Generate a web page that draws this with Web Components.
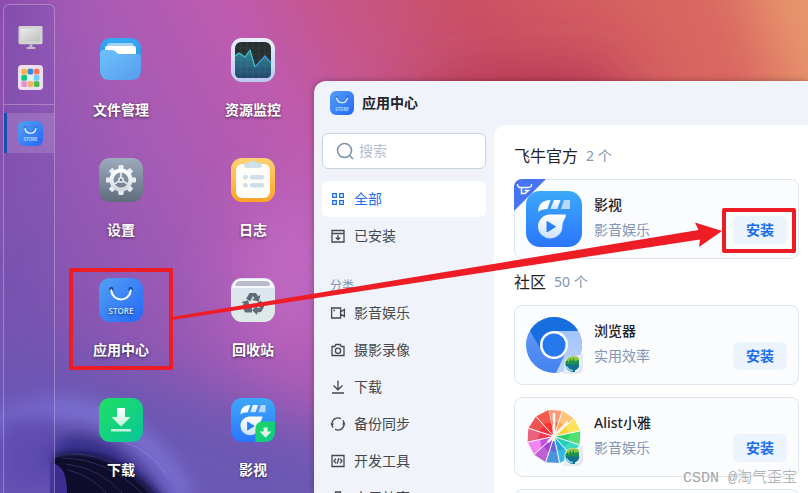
<!DOCTYPE html>
<html lang="zh-CN">
<head>
<meta charset="utf-8">
<title>应用中心</title>
<style>
body {
  margin: 0;
  font: 14px/20px "Noto Sans", "Noto Sans CJK SC", sans-serif;
  color: #1f2329;
}
</style>
</head>
<body>
<nas-desktop>
	<nas-dock slot="dock"></nas-dock>
	<desk-app icon="folder">文件管理</desk-app>
	<desk-app icon="monitor">资源监控</desk-app>
	<desk-app icon="gear">设置</desk-app>
	<desk-app icon="log">日志</desk-app>
	<desk-app icon="store">应用中心</desk-app>
	<desk-app icon="trash">回收站</desk-app>
	<desk-app icon="get">下载</desk-app>
	<desk-app icon="filmget">影视</desk-app>

	<app-window slot="window" heading="应用中心" icon="store">
		<search-box slot="side"></search-box>
		<nav-item slot="side" icon="grid" active>全部</nav-item>
		<nav-item slot="side" icon="installed">已安装</nav-item>
		<nav-label slot="side">分类</nav-label>
		<nav-item slot="side" icon="video">影音娱乐</nav-item>
		<nav-item slot="side" icon="camera">摄影录像</nav-item>
		<nav-item slot="side" icon="download">下载</nav-item>
		<nav-item slot="side" icon="sync">备份同步</nav-item>
		<nav-item slot="side" icon="code">开发工具</nav-item>
		<nav-item slot="side" icon="tool">实用效率</nav-item>

		<app-group heading="飞牛官方" count="2 个">
			<app-card icon="film" kind="影音娱乐" official>影视</app-card>
		</app-group>
		<app-group heading="社区" count="50 个">
			<app-card icon="browser" kind="实用效率">浏览器</app-card>
			<app-card icon="alist" kind="影音娱乐">Alist小雅</app-card>
			<app-card icon="film"></app-card>
		</app-group>
	</app-window>

	<mark-layer slot="marks">CSDN @淘气歪宝</mark-layer>
</nas-desktop>

<script type="module">
const html = (strings, ...parts) =>
	new DOMParser().parseFromString(parts
		.reduce((tpl, value, i) => `${tpl}${strings[i]}${value}`, '')
		.concat(strings[parts.length]),
	'text/html').querySelector('template')

class Base extends HTMLElement {
	constructor(tpl) {
		super()
		this.attachShadow({ mode: 'open' }).append(tpl.content.cloneNode(true))
	}
	$(sel) { return this.shadowRoot.querySelector(sel) }
}

/* ---------- icons ---------- */

const grad = (id, a, b, dir = 'x1="0" y1="0" x2="0" y2="1"') =>
	`<linearGradient id="${id}" ${dir}><stop stop-color="${a}"/><stop offset="1" stop-color="${b}"/></linearGradient>`
const diag = 'x1="0" y1="0" x2="1" y2="1"'
const times = (n, fn) => Array.from({ length: n }, (_, i) => fn(i)).join('')
const line = body => [16, `<g fill="none" stroke="currentColor" stroke-width="1.3">${body}</g>`]

const film = `<defs>${grad('f', '#3ca9f8', '#2a76fe')}${grad('w', '#fff', '#cfe2fc')}</defs>
<rect width="56" height="56" rx="14" fill="url(#f)"/>
<path d="M12.200 21C12 14 16 9 24.600 9L21.300 18C17 18 14 19 12.200 21z" fill="#fff"/>
<path d="M28 9h6.500l-3.200 9h-6.800z" fill="url(#w)"/>
<path d="M38 9H44v9h-9z" fill="#b9d7fb"/>
<path fill="url(#w)" d="M23 23.500H40C40 28 36.500 29 36.400 35.500A12.200 12 0 1 1 23 23.500z"/>
<path d="M21 30.500V41L29.500 35.700z" fill="#2a7ff5" stroke="#2a7ff5" stroke-linejoin="round"/>`

const badge = `<defs>${grad('bg', '#f1f3f6', '#e1e6ec', diag)}</defs>
<path d="M57 36V51a6 6 0 0 1-6 6H36C40 55 37 49 40 44S52 40 57 36z" fill="url(#bg)"/>
<circle cx="46.500" cy="47" r="8" fill="#fff"/>
<path d="M39.500 46Q40 40 46 39.300 52.500 39 53 42V47.500H39.500z" fill="#8cc63f"/>
<path d="M39.500 44.500l2.500-1v2l3-4v3l3-3.500v3l5-1V48H39.500z" fill="#1d9152"/>
<path d="M39.500 47.500H53.500Q53 52 49 53.500V55H45.500Q39.500 53 39.500 47.500z" fill="#14708f"/>
<path d="M40.500 49.500Q43 54 47 53.500" stroke="#8fd3ee" stroke-width="1.600" fill="none"/>`

const wheel = ['#fa9a78', '#fdc47c', '#fbe25c', '#52df74', '#3fdac0', '#36b8de',
	'#4c95dc', '#c35fd6', '#f183f2', '#e8617e', '#ef5454', '#f55a4c']
const core = ['#f7603c', '#fba23f', '#f8ce2f', '#1fce5c', '#1ccdb3', '#1aa3d6',
	'#6a5bd0', '#8f3fd0', '#b044d6', '#f5304c', '#f5283c', '#fa2a2a']
const pt = (r, deg) => {
	const a = (deg - 90) * Math.PI / 180
	return `${(28 + r * Math.cos(a)).toFixed(2)} ${(27.5 + r * Math.sin(a)).toFixed(2)}`
}

const icons = {
	store: [44, `<defs>${grad('s', '#53a0f4', '#2468f6', diag)}</defs>
<rect width="44" height="44" rx="11" fill="url(#s)"/>
<g fill="none" stroke-linecap="round"><path d="M11.500 13C9.500 9 14 8.500 13.800 12M32.500 13C34.500 9 30 8.500 30.200 12" stroke="#174a9c" stroke-width="1.600"/>
<path d="M12.200 12.500C14 24.500 30 24.500 31.800 12.500" stroke="#fff" stroke-width="2"/></g>
<text x="22" y="36" text-anchor="middle" font-family="Open Sans, sans-serif" font-weight="600" font-size="8" fill="#d3e4ff">STORE</text>`],

	folder: [44, `<defs>${grad('a', '#36a8f5', '#2387dd')}${grad('b', '#6cc2fb', '#589cee', diag)}</defs>
<rect x="1" width="41" height="42" rx="10" fill="url(#a)"/>
<path d="M8 9q0-4 3-4h21q3 0 3 4z" fill="#a4d4f8"/><path d="M6 20V10q0-2 2-2h27q2 0 2 2v12z" fill="#fff"/>
<path d="M1 15q0-3 3-3h9c4 0 4 4 8 4h18q3 0 3 3v13q0 10-10 10H11Q1 42 1 32z" fill="url(#b)"/>`],

	monitor: [44, `<defs>${grad('a', '#e8f0fb', '#b9c8ee')}${grad('b', '#2f8894', '#24476c')}</defs>
<rect width="44" height="44" rx="11" fill="url(#a)"/><rect x="4" y="4" width="36" height="36" rx="6" fill="#272f31"/>
<path d="M4 18l4-3 6 4 5-7 5 17 10-11 6 7v10q0 5-5 5H9q-5 0-5-5z" fill="url(#b)"/>
<path d="M10 4v36M16 4v36M22 4v36M28 4v36M34 4v36M4 10h36M4 16h36M4 22h36M4 28h36M4 34h36" stroke="#fff" opacity=".06"/>
<path d="M4 18l4-3 6 4 5-7 5 17" fill="none" stroke="#40c6cf" stroke-width="1.200"/><path d="M24 29l10-11 6 7" fill="none" stroke="#3b9be0" stroke-width="1.200"/>`],

	gear: [44, `<defs>${grad('a', '#9dacbd', '#5e6c7c')}${grad('b', '#fff', '#d3d9df')}</defs>
<rect width="44" height="44" rx="11" fill="url(#a)"/>
<g transform="translate(22 22)">${times(8, i => `<rect x="-2.600" y="-15" width="5.200" height="7" rx="1.200" fill="#e9edf0" transform="rotate(${i * 45})"/>`)}
<circle r="9.500" fill="none" stroke="url(#b)" stroke-width="4"/>
${times(3, i => `<path d="M-.900-8H.900V0H-.900z" fill="#e3e7eb" transform="rotate(${i * 120})"/>`)}
<circle r="3" fill="#e3e7eb"/><circle r="1.300" fill="#6b7886"/></g>`],

	log: [44, `<defs>${grad('a', '#ffd274', '#fda226')}</defs>
<rect width="44" height="44" rx="11" fill="url(#a)"/><rect x="5" y="6" width="34" height="34" rx="6" fill="#fffdf8"/>
<path d="M13 7q0-2.500 3-2.500h3q3-4 6 0h3q3 0 3 2.500 0 3-3 3H16q-3 0-3-3z" fill="#cfe0ea"/>
<g fill="#cddfea"><rect x="12" y="17" width="5" height="4.500" rx="2"/><rect x="19" y="17" width="14" height="4.500" rx="2"/>
<rect x="12" y="25" width="5" height="4.500" rx="2"/><rect x="19" y="25" width="14" height="4.500" rx="2"/></g>`],

	trash: [44, `<defs>${grad('a', '#dbe5ef', '#dfe9e6')}</defs>
<rect width="44" height="44" rx="11" fill="url(#a)"/><path d="M1 10Q2 1 11 1H33q9 0 10 9" fill="#f6f9fb"/>
<path d="M4 7q1-4 6-4H34q5 0 5 4 0 1-2 1H6Q4 8 4 7z" fill="#b7bcc8"/>
<g transform="translate(22 26) scale(1.150)" fill="#626c78">${times(3, i =>
		`<path transform="rotate(${i * 120})" d="M-6-4.500L-3-9.500H2.500L4.500-6.800 6.500-7.800 5-2-1-3.800 1.200-5 0-7-2.500-2.500z"/>`)}</g>`],

	get: [44, `<defs>${grad('a', '#1fe062', '#08c59a', diag)}${grad('b', '#fff', '#bff2da')}</defs>
<rect width="44" height="44" rx="11" fill="url(#a)"/>
<path d="M18 10h8v9h5.500L22 28.500 12.500 19H18z" fill="url(#b)"/><rect x="12" y="31" width="20" height="2.500" rx=".500" fill="#c2f3dd"/>`],

	film: [56, film],
	filmget: [56, `${film}<defs>${grad('g', '#1fd65f', '#0cc98e', diag)}</defs>
<path d="M31 56V40Q31 30 41 30H56V42Q56 56 42 56z" fill="url(#g)"/><path d="M41.500 37.500h5v5h5L44 50.500 36.500 42.500h5z" fill="#e2f3ea"/>`],

	browser: [56, `<defs><clipPath id="c"><circle cx="28" cy="28" r="28"/></clipPath>${grad('a', '#669df8', '#4482f0')}${grad('r', '#a2c3fb', '#c0d6fc')}</defs>
<g clip-path="url(#c)"><path d="M0 0H56V56H0z" fill="url(#a)"/><path d="M28 14H60V60H28L40 35z" fill="url(#r)"/>
<path d="M3.800 13.500L-2 0H60V14H28L15 33z" fill="#176ede"/></g>
<circle cx="28" cy="28" r="14" fill="#fff"/><circle cx="28" cy="28" r="11.500" fill="#2679ec"/>${badge}`],

	alist: [56, `${times(12, i => {
		const d = i * 30
		return `<path d="M28 27.500L${pt(27, d - 12)} ${pt(27, d + 18)}z" fill="${wheel[i]}"/>
<path d="M28 27.500L${pt(17, d - 12)} ${pt(14, d + 18)}z" fill="${core[i]}" opacity=".8"/>
<path d="M28 27.500L${pt(27, d - 12)}" stroke="#fff" stroke-width="1"/>`
	})}<path d="M28 4V32M42 13L22 33" fill="none" stroke="#fff5ee" stroke-width="2.600"/>${badge}`],

	display: [26, `<defs>${grad('a', '#eee', '#bcbcbc', diag)}</defs>
<rect x=".500" y="1" width="25" height="19" rx="1.500" fill="#d3d3d3"/><rect x="3" y="4" width="20" height="13" fill="url(#a)"/>
<path d="M12 20h3v3h3v2H9v-2h3z" fill="#c3bcc9"/>`],

	launcher: [26, `<rect width="26" height="26" rx="4" fill="#ecdff2"/>
${['#fcb43e', '#2f8de0', '#fa7757', '#0ccb78', '#e4f0fc', '#72d1fb', '#e592d3', '#e9b568', '#4fba51']
		.map((c, i) => `<rect x="${3.5 + i % 3 * 6.5}" y="${4 + (i / 3 | 0) * 6.5}" width="5.800" height="5.800" rx="1.500" fill="${c}"/>`).join('')}`],

	grid: line('<path d="M2.700 2.700h3.600v3.600H2.700zM9.700 2.700h3.600v3.600H9.700zM2.700 9.700h3.600v3.600H2.700zM9.700 9.700h3.600v3.600H9.700z"/>'),
	installed: line('<path d="M2 5.500V14H14V5.500zM2 5.500V2.500H14V5.500M8 7v4.500M5.800 9.500L8 11.700l2.200-2.200"/>'),
	video: line('<path d="M1.600 3h9v10h-9zM10.600 7L14.400 4.500v7L10.600 9M3.500 5.500h1.500"/>'),
	camera: line('<path d="M2 4.500h2.800l1-2h4.400l1 2H14v9H2z"/><circle cx="8" cy="8.800" r="2.600"/>'),
	download: line('<path d="M8 1.500v9M3.500 6.500L8 10.800l4.500-4.300M2 14h12"/>'),
	sync: line('<path d="M2 8.500A6 6 0 0 1 11 2.800M12.800 4.400A6 6 0 0 1 14 7M14 7.500A6 6 0 0 1 5 13.200M3.200 11.600A6 6 0 0 1 2 9"/><path d="M.300 7.500H4L2.200 10.300zM12 8.500h3.700L13.800 5.700z" fill="currentColor" stroke="none"/>'),
	code: line('<path d="M2 2.500h12v11H2zM6 5.800L4 8l2 2.200M10 5.800L12 8l-2 2.200M8.800 5.300l-1.600 5.400"/>'),
	tool: line('<path d="M5.500 4V2h5v2M2 4.500h12v9H2zM2 8.500h12"/>'),
	search: [18, '<g fill="none" stroke="currentColor" stroke-width="1.600"><circle cx="8.500" cy="8.500" r="7"/><path d="M13.500 13.500L17 17"/></g>'],
}

const icon = html`<template>
<style>
:host { display: block; flex: none; width: 16px; height: 16px; }
svg { display: block; width: 100%; height: 100%; overflow: visible; }
</style>
<span id="art"></span>
</template>`

class NasIcon extends Base {
	static observedAttributes = ['name']
	constructor() { super(icon) }
	attributeChangedCallback() {
		const [size, body] = icons[this.getAttribute('name')]
		this.$('#art').innerHTML = `<svg viewBox="0 0 ${size} ${size}" aria-hidden="true">${body}</svg>`
	}
}
customElements.define('nas-icon', NasIcon)

/* ---------- desktop ---------- */

const desktop = html`<template>
<style>
:host {
  display: flex;
  position: relative;
  height: 100vh;
  overflow: hidden;
  background: #a85cb4;
}
#paper {
  position: absolute;
  inset: 0;
  width: 100%;
  height: 100%;
}
#apps {
  display: grid;
  grid-template-columns: 132px 132px;
  grid-auto-rows: 120px;
  align-content: start;
  padding-top: 38px;
  z-index: 1;
}
</style>
<svg id="paper" viewBox="0 0 808 493" preserveAspectRatio="xMinYMin slice" aria-hidden="true">
<defs>
<linearGradient id="base" gradientUnits="userSpaceOnUse" x1="0" y1="270" x2="640" y2="-60">
<stop stop-color="#7c54b0"/><stop offset=".25" stop-color="#a35bb5"/><stop offset=".45" stop-color="#be5bb0"/>
<stop offset=".58" stop-color="#c6568a"/><stop offset=".75" stop-color="#cb5063"/><stop offset="1" stop-color="#d96660"/>
</linearGradient>
<linearGradient id="vortex" x1="0" y1="0" x2="1" y2="1"><stop stop-color="#0d0b26"/><stop offset="1" stop-color="#1c1a4c"/></linearGradient>
<filter id="b30" x="-50%" y="-50%" width="200%" height="200%"><feGaussianBlur stdDeviation="30"/></filter>
<filter id="b10" x="-50%" y="-50%" width="200%" height="200%"><feGaussianBlur stdDeviation="9"/></filter>
<filter id="b3"><feGaussianBlur stdDeviation="3"/></filter>
</defs>
<path d="M0 0H808V493H0z" fill="url(#base)"/>
<g filter="url(#b30)">
<path d="M-60-60H50L0 160-60 300z" fill="#8a4cac"/>
<path d="M730-60H900V200H820z" fill="#e7966d"/>
<path d="M430 80L610 65 630 150H410z" fill="#b23651"/>
<ellipse cx="290" cy="270" rx="50" ry="80" fill="#bf68c2"/>
<path d="M-60 340L150 380 360 440V560H-60z" fill="#6b58b4"/>
</g>
<g fill="none">
<path d="M-10 430C60 385 140 412 185 500" stroke="#7f78dc" stroke-width="22" opacity=".75" filter="url(#b10)"/>
<path d="M40 468C70 432 110 440 158 510" stroke="#2c2880" stroke-width="22" filter="url(#b10)"/>
</g>
<path d="M0 420H56V493H0z" fill="#5a48b0" opacity=".8" filter="url(#b10)"/>
<path d="M55 456C90 446 130 460 162 500H55z" fill="url(#vortex)" filter="url(#b3)"/>
<path d="M55 458C90 452 120 464 148 493H55z" fill="#0f0d2c"/>
<path d="M60 454Q110 450 160 493M62 458Q105 458 142 493M66 464Q100 468 122 493M68 470Q92 476 106 493" fill="none" stroke="#34336a" stroke-width=".800"/>
<path d="M50 463C62 464 67 474 67 493H50z" fill="#3d2c92"/>
<path d="M124 442Q150 450 166 474" fill="none" stroke="#9b8fdf" opacity=".5"/>
</svg>
<slot name="dock"></slot>
<main id="apps"><slot></slot></main>
<slot name="window"></slot>
<slot name="marks"></slot>
</template>`

customElements.define('nas-desktop', class extends Base {
	constructor() { super(desktop) }
})

const dock = html`<template>
<style>
:host {
  display: flex;
  flex-direction: column;
  box-sizing: border-box;
  width: 52px;
  margin: 4px 0 0 3px;
  padding-top: 12px;
  border: 1px solid rgba(255, 255, 255, .28);
  border-bottom: 0;
  border-radius: 6px 6px 0 0;
  background: rgba(110, 80, 180, .22);
  z-index: 1;
}
button {
  display: grid;
  place-items: center;
  height: 40px;
  padding: 0;
  border: 0;
  border-left: 3px solid transparent;
  background: none;
}
button.on {
  border-left-color: #1450b0;
  background: rgba(255, 255, 255, .14);
}
hr {
  width: 100%;
  margin: 7px 0 8px;
  border: 0;
  border-top: 1px solid rgba(255, 255, 255, .28);
}
nas-icon { width: 25px; height: 25px; }
</style>
<button aria-label="显示桌面"><nas-icon name="display"></nas-icon></button>
<button aria-label="全部应用"><nas-icon name="launcher"></nas-icon></button>
<hr>
<button class="on" aria-label="应用中心"><nas-icon name="store"></nas-icon></button>
</template>`

customElements.define('nas-dock', class extends Base {
	constructor() { super(dock) }
})

const deskApp = html`<template>
<style>
:host { display: block; }
button {
  display: flex;
  flex-direction: column;
  align-items: center;
  gap: 18px;
  width: 100%;
  padding: 0;
  border: 0;
  background: none;
  font: inherit;
  font-weight: 700;
  color: #fff;
  text-shadow: 0 1px 3px rgba(0, 0, 0, .6);
}
nas-icon { width: 44px; height: 44px; }
</style>
<button><nas-icon></nas-icon><span><slot></slot></span></button>
</template>`

customElements.define('desk-app', class extends Base {
	constructor() { super(deskApp) }
	connectedCallback() {
		this.$('nas-icon').setAttribute('name', this.getAttribute('icon'))
	}
})

/* ---------- window ---------- */

const appWindow = html`<template>
<style>
:host {
  display: flex;
  flex-direction: column;
  position: absolute;
  inset: 81px 0 0 314px;
  overflow: hidden;
  border-radius: 12px 0 0 0;
  background: #f0f3f9;
  box-shadow: 0 0 6px rgba(0, 0, 0, .3);
  z-index: 2;
}
header {
  display: flex;
  align-items: center;
  gap: 8px;
  flex: none;
  height: 44px;
  padding: 0 16px;
}
header nas-icon { width: 24px; height: 24px; }
h1 { margin: 0; font: inherit; font-weight: 700; }
#body { display: flex; flex: 1; min-height: 0; }
nav {
  display: flex;
  flex-direction: column;
  gap: 1px;
  flex: none;
  width: 164px;
  padding: 8px;
  overflow: hidden;
}
#list {
  flex: 1;
  min-width: 0;
  padding: 8px 9px 0 20px;
  overflow: hidden;
  border-radius: 12px 0 0 0;
  background: #fff;
}
</style>
<header><nas-icon></nas-icon><h1></h1></header>
<div id="body">
<nav><slot name="side"></slot></nav>
<section id="list"><slot></slot></section>
</div>
</template>`

customElements.define('app-window', class extends Base {
	constructor() { super(appWindow) }
	connectedCallback() {
		this.$('nas-icon').setAttribute('name', this.getAttribute('icon'))
		this.$('h1').textContent = this.getAttribute('heading')
	}
})

const searchBox = html`<template>
<style>
:host { display: block; flex: none; margin-bottom: 11px; }
label {
  display: flex;
  align-items: center;
  gap: 5px;
  box-sizing: border-box;
  height: 36px;
  padding: 0 12px 0 13px;
  border: 1px solid #c6d4e2;
  border-radius: 6px;
  background: #fff;
  color: #7d92ad;
}
nas-icon { width: 18px; height: 18px; }
input {
  flex: 1;
  min-width: 0;
  padding: 0;
  border: 0;
  outline: 0;
  background: none;
  font: inherit;
}
input::placeholder { color: #b4c0d0; opacity: 1; }
</style>
<label><nas-icon name="search"></nas-icon><input type="text" placeholder="搜索" aria-label="搜索"></label>
</template>`

customElements.define('search-box', class extends Base {
	constructor() { super(searchBox) }
})

const navItem = html`<template>
<style>
:host { display: block; flex: none; }
button {
  display: flex;
  align-items: center;
  gap: 8px;
  width: 100%;
  height: 36px;
  padding: 0 8px;
  border: 0;
  border-radius: 6px;
  background: none;
  font: inherit;
  color: #43474e;
}
:host([active]) button { background: #fff; color: #1a6fe8; }
</style>
<button><nas-icon></nas-icon><span><slot></slot></span></button>
</template>`

customElements.define('nav-item', class extends Base {
	constructor() { super(navItem) }
	connectedCallback() {
		this.$('nas-icon').setAttribute('name', this.getAttribute('icon'))
	}
})

const navLabel = html`<template>
<style>
:host {
  display: block;
  flex: none;
  padding: 23px 8px 0;
  font-size: 12px;
  line-height: 16px;
  color: #7f95b4;
}
</style>
<slot></slot>
</template>`

customElements.define('nav-label', class extends Base {
	constructor() { super(navLabel) }
})

const group = html`<template>
<style>
:host { display: block; }
header {
  display: flex;
  align-items: center;
  gap: 8px;
  height: 46px;
}
h2 { margin: 0; font: inherit; font-size: 16px; }
#count { color: #8196b2; }
#cards { display: flex; flex-direction: column; gap: 12px; }
</style>
<header><h2></h2><span id="count"></span></header>
<div id="cards"><slot></slot></div>
</template>`

customElements.define('app-group', class extends Base {
	constructor() { super(group) }
	connectedCallback() {
		this.$('h2').textContent = this.getAttribute('heading')
		this.$('#count').textContent = this.getAttribute('count')
	}
})

const card = html`<template>
<style>
:host {
  display: flex;
  gap: 12px;
  position: relative;
  box-sizing: border-box;
  height: 80px;
  padding: 11px;
  border: 1px solid #dfe6ef;
  border-radius: 8px;
  background: #fbfcfe;
}
nas-icon { width: 56px; height: 56px; z-index: 1; }
#text { flex: 1; padding-top: 1px; line-height: 25px; }
#name { font-weight: 500; }
#kind { color: #8196b2; }
button {
  align-self: flex-end;
  width: 54px;
  height: 28px;
  margin-bottom: 3px;
  padding: 0;
  border: 0;
  border-radius: 6px;
  background: #ebf3fc;
  font: inherit;
  font-weight: 700;
  color: #1a6fe8;
}
#ribbon {
  display: none;
  position: absolute;
  top: -1px;
  left: -1px;
  width: 32px;
  height: 32px;
  border-radius: 8px 0 0 0;
}
:host([official]) #ribbon { display: block; }
</style>
<svg id="ribbon" viewBox="0 0 32 32" aria-hidden="true">
<path d="M0 0H32L0 32z" fill="#4674f2"/>
<path d="M3.500 5C3.500 8.500 5 8.500 8 8.500H14C17 8.500 17.500 8 17.500 5M7.500 8.500V14.500H11L14.500 11.500H10.500" fill="none" stroke="#fff" stroke-width="1.400"/>
</svg>
<nas-icon></nas-icon>
<div id="text"><div id="name"><slot></slot></div><div id="kind"></div></div>
<button>安装</button>
</template>`

customElements.define('app-card', class extends Base {
	constructor() { super(card) }
	connectedCallback() {
		this.$('nas-icon').setAttribute('name', this.getAttribute('icon'))
		this.$('#kind').textContent = this.getAttribute('kind')
	}
})

/* ---------- red marks and watermark ---------- */

const marks = html`<template>
<style>
:host {
  display: flex;
  align-items: flex-end;
  justify-content: flex-end;
  position: absolute;
  inset: 0;
  padding: 0 11px 4px 0;
  z-index: 3;
  pointer-events: none;
  font: 300 15px/20px "Liberation Mono", "Noto Sans CJK SC", monospace;
  color: #a3a5a9;
}
svg { position: absolute; inset: 0; width: 100%; height: 100%; }
</style>
<svg aria-hidden="true">
<g fill="none" stroke="#ee1c24" stroke-width="4" stroke-linejoin="round">
<rect x="71" y="270" width="100" height="98"/><rect x="724" y="210" width="70" height="41"/>
</g>
<path d="M172 317L698.500 230 695 222.500 722 231 699 247 700 239.500 172 320z" fill="#ee1c24"/>
</svg>
<span><slot></slot></span>
</template>`

customElements.define('mark-layer', class extends Base {
	constructor() { super(marks) }
})
</script>
</body>
</html>
